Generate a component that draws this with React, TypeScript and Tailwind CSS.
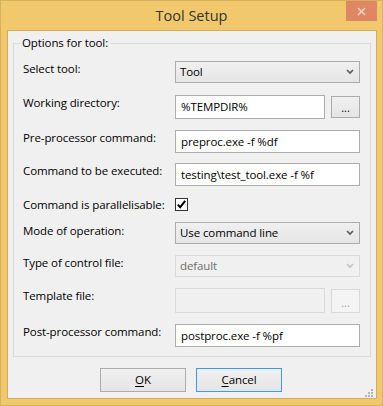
import React from "react";

const font = { fontFamily: '"Open Sans", "Liberation Sans", sans-serif' };

function Chevron({ disabled }: { disabled?: boolean }) {
  return (
    <svg width="8" height="6" viewBox="0 0 8 6" className="shrink-0">
      <path d="M1 1 L4 4 L7 1" fill="none" stroke={disabled ? "#c4c4c4" : "#5c5c5c"} strokeWidth="1.7" />
    </svg>
  );
}

function Combo({ value, disabled }: { value: string; disabled?: boolean }) {
  return (
    <div
      className={`flex items-center justify-between w-[185px] h-[22px] pl-[4px] pr-[5px] border ${
        disabled
          ? "border-[#d9d9d9] bg-[#f0f0f0] text-[#6d6d6d]"
          : "border-[#acacac] bg-gradient-to-b from-[#f0f0f0] to-[#e5e5e5] text-black"
      }`}
    >
      <span className="leading-[16px]">{value}</span>
      <Chevron disabled={disabled} />
    </div>
  );
}

function TextBox({ value, w, h, disabled }: { value: string; w: string; h: string; disabled?: boolean }) {
  return (
    <div
      className={`flex items-center pl-[5px] border ${w} ${h} ${
        disabled ? "border-[#d9d9d9] bg-[#f0f0f0]" : "border-[#abadb3] bg-white text-black"
      }`}
    >
      <span className="leading-[16px] whitespace-nowrap">{value}</span>
    </div>
  );
}

function Browse({ h, disabled }: { h: string; disabled?: boolean }) {
  return (
    <div
      className={`flex items-end justify-center pb-[4px] w-[29px] border ${h} ${
        disabled
          ? "border-[#d9d9d9] bg-[#f4f4f4] text-[#a0a0a0]"
          : "border-[#acacac] bg-gradient-to-b from-[#f0f0f0] to-[#e5e5e5] text-black"
      }`}
    >
      <span className="leading-[10px] text-[11px]">...</span>
    </div>
  );
}

function Label({ children }: { children: React.ReactNode }) {
  return <div className="w-[152px] shrink-0 leading-[16px] whitespace-nowrap">{children}</div>;
}

export default function App() {
  return (
    <div
      className="w-[383px] h-[406px] bg-[#f1c96c] border border-[#d6b15e] flex flex-col text-[11.5px] tracking-[-0.1px] text-black"
      style={font}
    >
      {/* title bar */}
      <div className="grid grid-cols-[1fr_auto_1fr] h-[29px] shrink-0">
        <div />
        <div className="text-[14.5px] tracking-normal leading-[29px] text-[#333333]">Tool Setup</div>
        <div className="flex justify-end pr-[5px]">
          <div className="w-[31px] h-[20px] bg-[#df8762] flex items-center justify-center">
            <svg width="9" height="9" viewBox="0 0 9 9">
              <path d="M1 1 L8 8 M8 1 L1 8" stroke="#f6d3c4" strokeWidth="1.6" />
            </svg>
          </div>
        </div>
      </div>

      {/* client */}
      <div className="relative ml-[6px] w-[370px] h-[369px] border border-[#d4ad5a] bg-[#f0f0f0] flex flex-col">
        <fieldset className="mt-[4px] mx-[5px] border border-[#dcdcdc] pl-[9px] pr-[10px] pt-[10px] pb-[9px]">
          <legend className="-ml-[3px] px-[2px] leading-[16px]">Options for tool:</legend>

          <div className="flex h-[22px]">
            <Label>Select tool:</Label>
            <Combo value="Tool" />
          </div>

          <div className="flex items-start h-[24px] mt-[12px]">
            <Label>Working directory:</Label>
            <div className="flex items-center gap-[6px]">
              <TextBox value="%TEMPDIR%" w="w-[150px]" h="h-[24px]" />
              <Browse h="h-[22px]" />
            </div>
          </div>

          <div className="flex h-[23px] mt-[11px]">
            <Label>Pre-processor command:</Label>
            <TextBox value="preproc.exe -f %df" w="w-[185px]" h="h-[23px]" />
          </div>

          <div className="flex h-[23px] mt-[10px]">
            <Label>Command to be executed:</Label>
            <TextBox value="testing\test_tool.exe -f %f" w="w-[185px]" h="h-[23px]" />
          </div>

          <div className="flex items-center h-[13px] mt-[12px]">
            <Label>Command is parallelisable:</Label>
            <div className="w-[13px] h-[13px] border border-[#333333] bg-white flex items-center justify-center">
              <svg width="11" height="11" viewBox="0 0 11 11">
                <path d="M1.8 5.6 L4.2 8.2 L9.2 1.8" fill="none" stroke="#000" strokeWidth="2" />
              </svg>
            </div>
          </div>

          <div className="flex h-[22px] mt-[11px]">
            <div className="w-[152px] shrink-0 leading-[16px] pt-[1px]">Mode of operation:</div>
            <Combo value="Use command line" />
          </div>

          <div className="flex h-[22px] mt-[11px]">
            <Label>Type of control file:</Label>
            <Combo value="default" disabled />
          </div>

          <div className="flex items-start h-[25px] mt-[11px]">
            <Label>Template file:</Label>
            <div className="flex items-center gap-[6px]">
              <TextBox value="" w="w-[150px]" h="h-[25px]" disabled />
              <Browse h="h-[24px]" disabled />
            </div>
          </div>

          <div className="flex h-[23px] mt-[11px]">
            <Label>Post-processor command:</Label>
            <TextBox value="postproc.exe -f %pf" w="w-[185px]" h="h-[23px]" />
          </div>
        </fieldset>

        <div className="flex justify-center gap-[10px] mt-[11px] pr-[2px]">
          <div className="w-[86px] h-[24px] border border-[#acacac] bg-gradient-to-b from-[#f0f0f0] to-[#e5e5e5] flex items-center justify-center">
            <span className="leading-[16px]">
              <span className="underline underline-offset-2">O</span>K
            </span>
          </div>
          <div className="w-[86px] h-[24px] border border-[#3c9af2] bg-gradient-to-b from-[#f0f0f0] to-[#e5e5e5] flex items-center justify-center">
            <span className="leading-[16px]">
              <span className="underline underline-offset-2">C</span>ancel
            </span>
          </div>
        </div>

        {/* size grip */}
        <svg width="8" height="8" viewBox="0 0 8 8" className="absolute right-[3px] bottom-[1px]">
          <rect x="6" y="0" width="2" height="2" fill="#b4b4b4" />
          <rect x="3" y="3" width="2" height="2" fill="#b4b4b4" />
          <rect x="6" y="3" width="2" height="2" fill="#b4b4b4" />
          <rect x="0" y="6" width="2" height="2" fill="#b4b4b4" />
          <rect x="3" y="6" width="2" height="2" fill="#b4b4b4" />
          <rect x="6" y="6" width="2" height="2" fill="#b4b4b4" />
        </svg>
      </div>
    </div>
  );
}
